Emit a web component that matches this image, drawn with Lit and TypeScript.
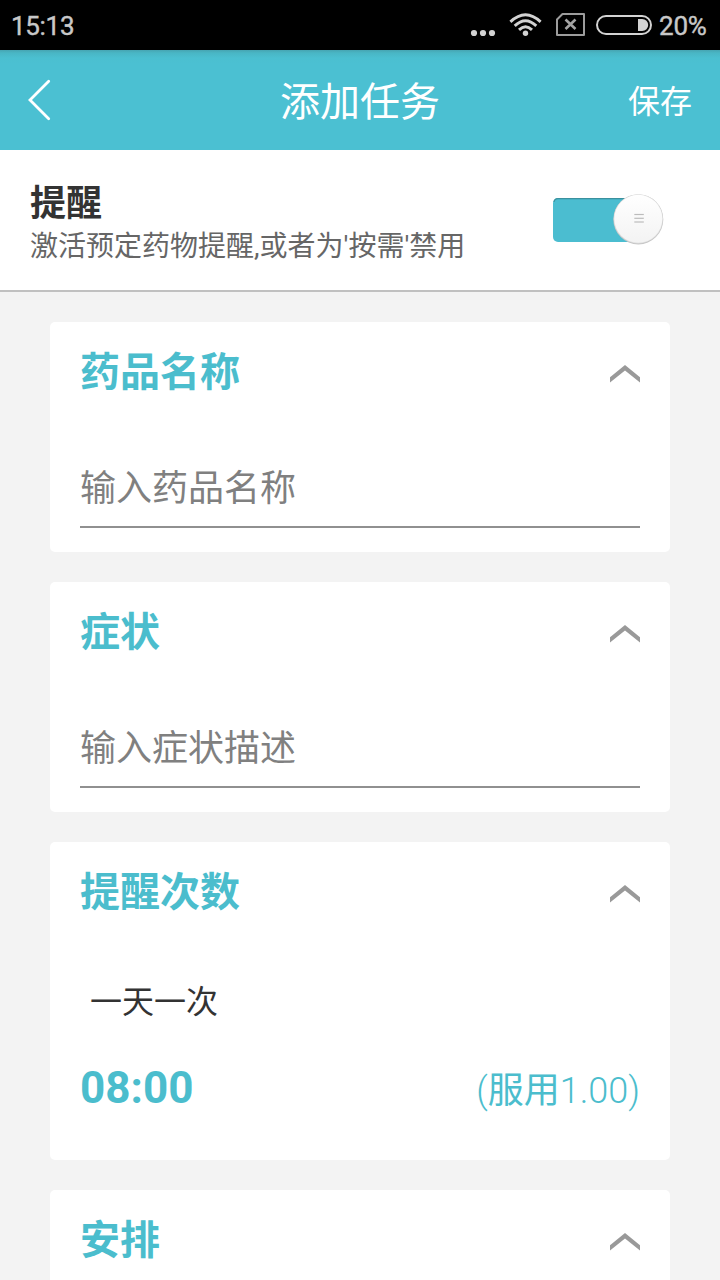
import { LitElement, html, css, svg } from "lit";
import { customElement, property } from "lit/decorators.js";

@customElement("status-bar")
class StatusBar extends LitElement {
  static styles = css`
    :host {
      display: flex;
      align-items: center;
      height: 50px;
      padding: 2px 12px 0 11px;
      box-sizing: border-box;
      background: #000;
      color: #c8c8c8;
      font: 26px/48px Roboto, sans-serif;
      -webkit-text-stroke: 0.4px #c8c8c8;
    }
    .time { flex: 1; letter-spacing: -0.3px; }
    .icons { display: block; width: 188px; height: 48px; margin-right: 5px; flex: none; }
    .level { width: 49px; white-space: nowrap; letter-spacing: -0.2px; }
  `;
  render() {
    return html`
      <span class="time">15:13</span>
      <svg class="icons" viewBox="466 2 188 48" fill="none" stroke="none">
        <g fill="#d2d2d2">
          <circle cx="474" cy="33" r="3.1" />
          <circle cx="483" cy="33" r="3.1" />
          <circle cx="492" cy="33" r="3.1" />
          <circle cx="525.5" cy="33.2" r="2.7" />
        </g>
        <g stroke="#d2d2d2" stroke-width="2.9">
          <path d="M510.4 21.9Q525.5 7.7 540.6 21.9" />
          <path d="M514.7 25.9Q525.5 15.6 536.3 25.9" />
          <path d="M519 29.9Q525.5 23.6 532 29.9" />
        </g>
        <path d="M562.5 14H584V35H557V19.5Z" stroke="#9c9c9c" stroke-width="2" stroke-linejoin="round" />
        <path d="M565.5 19.5L575.5 29M575.5 19.5L565.5 29" stroke="#a4a4a4" stroke-width="2.6" />
        <rect x="597" y="16" width="54" height="18" rx="9" stroke="#d2d2d2" stroke-width="2" />
        <path d="M638 19H642.2A6 6 0 0 1 642.2 31H638Z" fill="#d2d2d2" />
      </svg>
      <span class="level">20%</span>
    `;
  }
}

@customElement("task-card")
class TaskCard extends LitElement {
  @property() heading = "";
  static styles = css`
    :host {
      display: block;
      background: #fff;
      border-radius: 5px;
      padding: 0 30px;
    }
    .head {
      display: flex;
      align-items: center;
      justify-content: space-between;
      height: 100px;
    }
    .title { margin: 0; padding-top: 2px; font-size: 40px; line-height: 100px; font-weight: 700; color: #4bbdcd; }
    .chevron { display: block; width: 30px; height: 20px; margin-top: 4px; }
  `;
  render() {
    return html`
      <div class="head">
        <h2 class="title">${this.heading}</h2>
        <svg class="chevron" viewBox="0 0 30 20">
          <path d="M15 1L30 13.3V18.5L15 6.4L0 18.5V13.3Z" fill="#999" />
        </svg>
      </div>
      <slot></slot>
    `;
  }
}

@customElement("app-root")
class AppRoot extends LitElement {
  static styles = css`
    :host {
      display: flex;
      flex-direction: column;
      height: 1280px;
      overflow: hidden;
      background: #f3f3f3;
      font-family: Roboto, "Noto Sans CJK SC", sans-serif;
    }
    .bar {
      display: grid;
      grid-template-columns: 120px 1fr 120px;
      align-items: center;
      flex: none;
      height: 100px;
      color: #fff;
      background: linear-gradient(#46a5b2 0, #49b6c5 3px, #4bbfd0 8px, #4bc0d2 14px);
    }
    .back { display: block; width: 24px; height: 42px; margin-left: 27px; }
    .caption { margin: 0; padding-top: 6px; text-align: center; font-size: 40px; line-height: 94px; font-weight: 400; }
    .save { text-align: right; padding: 4px 28px 0 0; font-size: 32px; line-height: 96px; }
    .remind {
      display: flex;
      justify-content: space-between;
      flex: none;
      height: 142px;
      box-sizing: border-box;
      padding: 31px 56px 0 30px;
      background: #fff;
      border-bottom: 2px solid #c0c0c0;
    }
    .name { font-size: 36px; line-height: 46px; font-weight: 700; color: #333; }
    .note { font-size: 28px; line-height: 40px; color: #666; }
    .switch { display: block; width: 112px; height: 56px; margin-top: 10px; }
    .list { display: flex; flex-direction: column; gap: 30px; padding: 30px 50px 0; }
    .field {
      display: block;
      width: 100%;
      height: 82px;
      margin: 24px 0;
      padding: 5px 0 0;
      box-sizing: border-box;
      border: 0;
      border-bottom: 2px solid #909090;
      border-radius: 0;
      background: none;
      outline: 0;
      font: 36px Roboto, "Noto Sans CJK SC", sans-serif;
      color: #333;
    }
    .field::placeholder { color: #808080; opacity: 1; }
    .often { padding: 36px 0 0 10px; font-size: 32px; line-height: 48px; color: #333; }
    .dose {
      display: flex;
      align-items: center;
      justify-content: space-between;
      height: 134px;
      color: #4bbdcd;
    }
    .hour { font-size: 44px; line-height: 60px; font-weight: 700; margin-bottom: 11px; }
    .amount { font-size: 36px; line-height: 60px; font-weight: 300; margin-bottom: 4px; }
    .unit { font-weight: 400; }
    .rest { height: 130px; }
  `;
  render() {
    return html`
      <status-bar></status-bar>
      <header class="bar">
        <svg class="back" viewBox="0 0 24 42">
          <path d="M21.7 2.3L3 21L21.7 39.7" fill="none" stroke="#fff" stroke-width="2.8" stroke-linecap="round" />
        </svg>
        <h1 class="caption">添加任务</h1>
        <span class="save">保存</span>
      </header>
      <section class="remind">
        <div>
          <div class="name">提醒</div>
          <div class="note">激活预定药物提醒,或者为'按需'禁用</div>
        </div>
        <svg class="switch" viewBox="552 191 112 56">
          <defs>
            <linearGradient id="knob" x1="0" y1="0" x2="0" y2="1">
              <stop offset="0" stop-color="#fff" />
              <stop offset="1" stop-color="#f3f3f3" />
            </linearGradient>
          </defs>
          <rect x="553" y="198" width="90" height="44" rx="5" fill="#4bbdd0" />
          <path d="M554 202Q554.5 198.7 558 198.7H630" fill="none" stroke="#3b919e" stroke-width="1.2" />
          <circle cx="638.3" cy="219.4" r="25" fill="#c6c6c6" />
          <circle cx="638.3" cy="218.8" r="24.6" fill="#dedede" />
          <circle cx="638.3" cy="218.8" r="24" fill="url(#knob)" />
          ${[214.5, 218.3, 222].map(
            (y) => svg`<path d=${`M634.3 ${y}H643.8`} stroke="#bcbcbc" stroke-width="1.2" />`
          )}
        </svg>
      </section>
      <main class="list">
        <task-card heading="药品名称">
          <input class="field" placeholder="输入药品名称" />
        </task-card>
        <task-card heading="症状">
          <input class="field" placeholder="输入症状描述" />
        </task-card>
        <task-card heading="提醒次数">
          <div class="often">一天一次</div>
          <div class="dose">
            <span class="hour">08:00</span>
            <span class="amount">(<span class="unit">服用</span>1.00)</span>
          </div>
        </task-card>
        <task-card heading="安排"><div class="rest"></div></task-card>
      </main>
    `;
  }
}
